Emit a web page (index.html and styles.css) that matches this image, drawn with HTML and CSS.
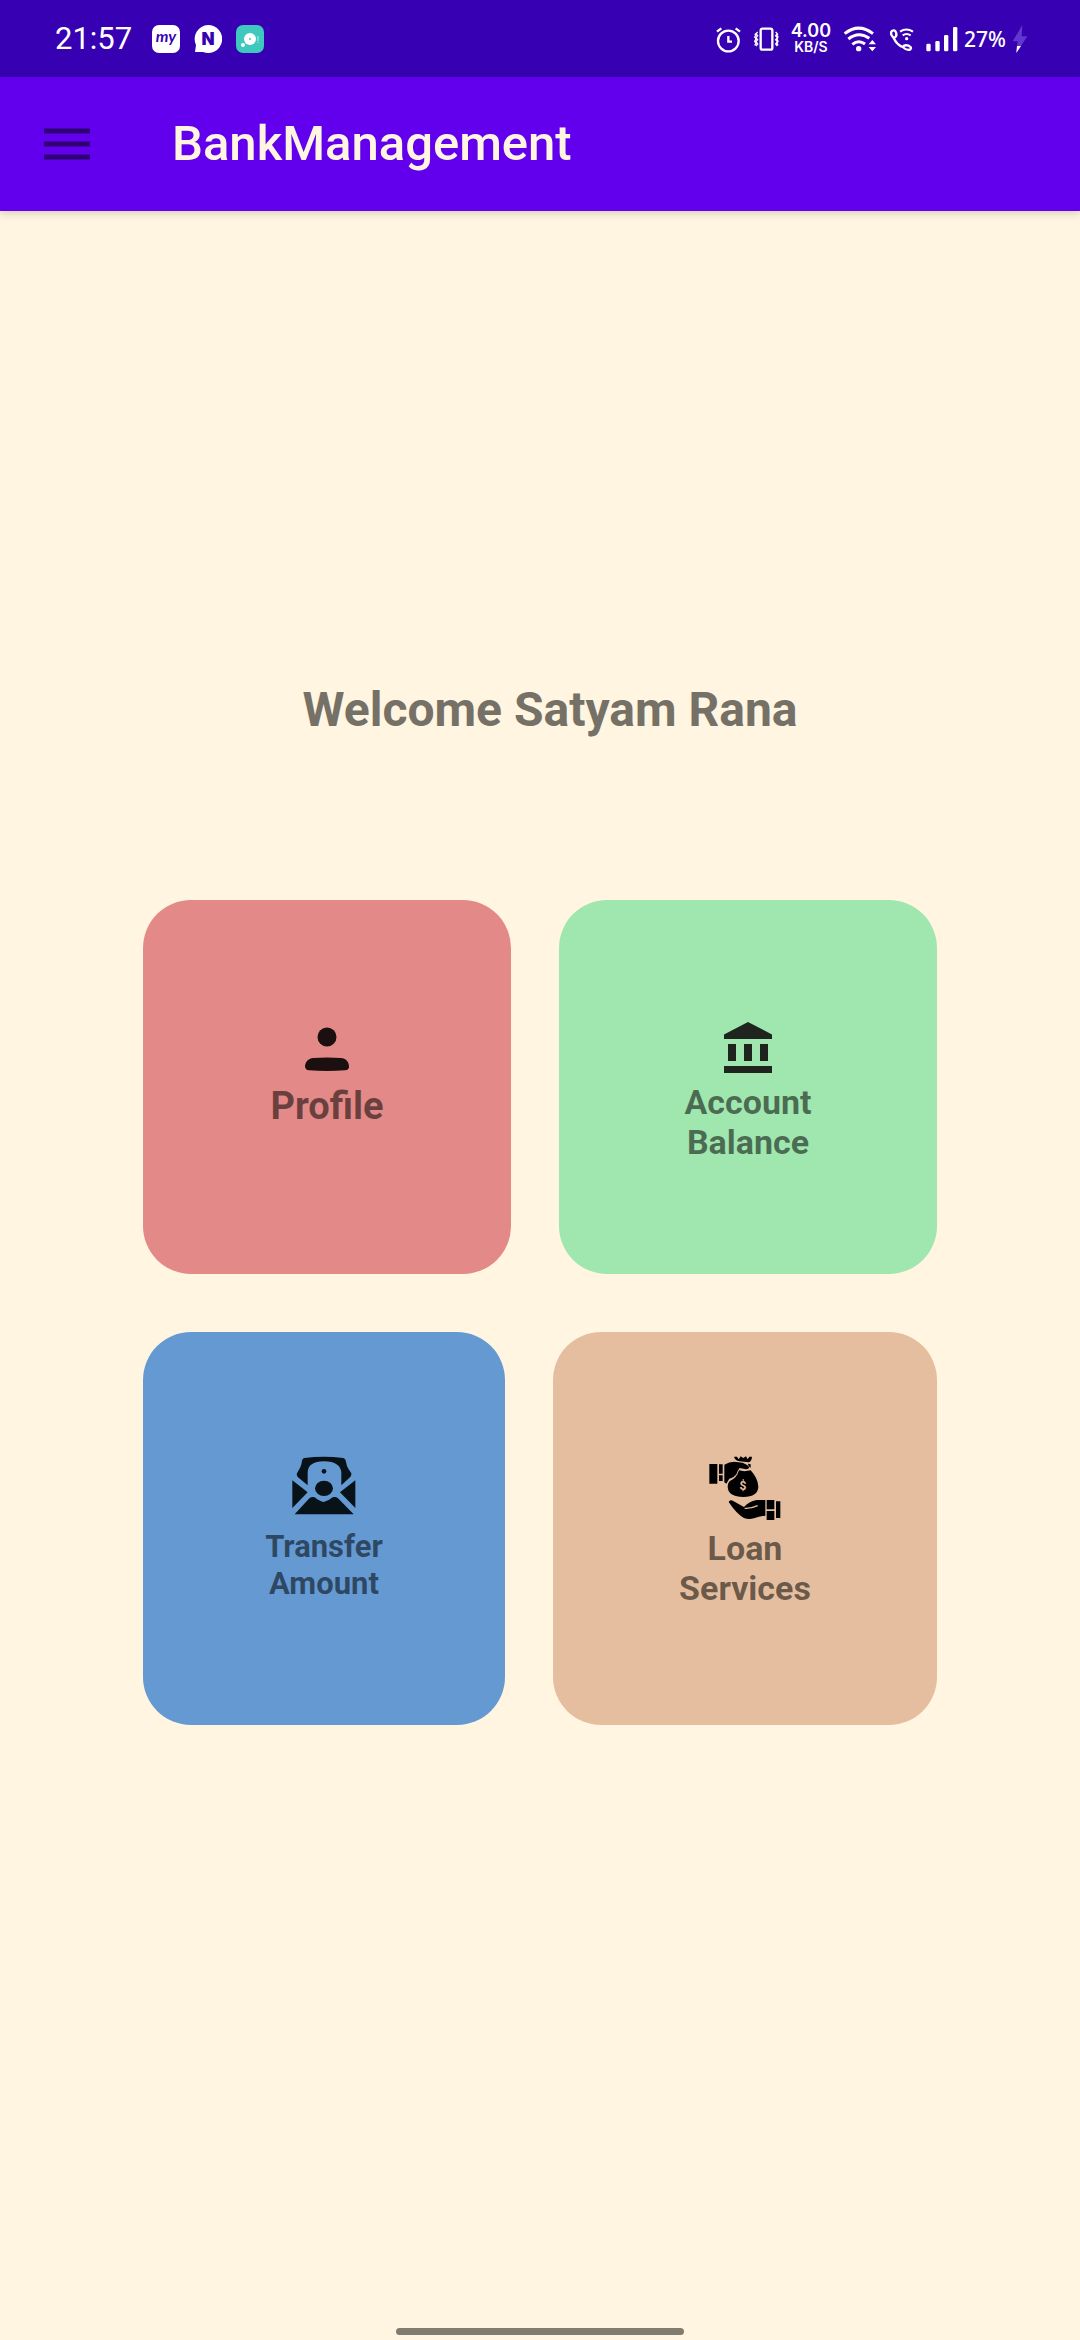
FILE: index.html
```html
<!DOCTYPE html>
<html lang="en">
<head>
<meta charset="utf-8">
<meta name="viewport" content="width=device-width, initial-scale=1">
<title>BankManagement</title>
<link rel="stylesheet" href="styles.css">
</head>
<body>
<div class="status">
  <div class="status-side">
    <span class="clock">21:57</span>
    <div class="notices">
      <svg width="28" height="30" viewBox="0 0 28 30" aria-hidden="true">
        <rect y="1" width="28" height="28" rx="7" fill="#fff"/>
        <text class="my" x="14" y="18" text-anchor="middle">my</text>
      </svg>
      <svg width="28" height="30" viewBox="0 0 28 30" aria-hidden="true">
        <path d="M14 1a14 14 0 1 1-5 27H1l1-7A14 14 0 0 1 14 1z" fill="#fff"/>
        <text class="n" x="14" y="21" text-anchor="middle">N</text>
      </svg>
      <svg width="28" height="30" viewBox="0 0 28 30" aria-hidden="true">
        <rect y="1" width="28" height="28" rx="7" fill="#3fc8bd"/>
        <circle cx="14" cy="15" r="6" fill="#fff"/>
        <circle cx="14" cy="15" r="1" fill="#3fc8bd"/>
        <circle cx="7" cy="21" r="2" fill="#fff"/>
        <path d="M22 12v5M22 18v1" stroke="#b5f0e8"/>
      </svg>
    </div>
  </div>
  <div class="status-side indicators">
    <svg width="25" height="28" viewBox="42 73 75 84" aria-hidden="true">
      <g fill="none" stroke="#fff" stroke-width="7"><circle cx="79" cy="121" r="31"/><path d="M79 106v17h11M45 93l13-10M101 83l13 10"/></g>
    </svg>
    <svg width="26" height="28" viewBox="154 73 78 84" aria-hidden="true">
      <g fill="none" stroke="#fff" stroke-width="5"><rect x="177" y="84" width="35" height="63" rx="6" stroke-width="7"/><path d="M168 94l-5 5 5 6-5 6 5 6-5 6 5 7-5 6M159 99l4 4-4 6 4 6-4 7 4 6-4 6M222 94l5 5-5 6 5 6-5 6 5 6-5 7 5 6M229 99l-3 4 3 6-3 6 3 7-3 6 3 6" stroke-width="4"/></g>
    </svg>
    <div class="net"><span class="rate">4.00</span><span class="unit">KB/S</span></div>
    <svg width="34" height="28" viewBox="428 73 102 84" aria-hidden="true">
      <g fill="none" stroke="#fff" stroke-width="9"><path d="M433 99Q475 66 518 99M444 115Q475 91 507 113M456 131Q475 116 494 130"/></g>
      <circle cx="475" cy="144" r="8" fill="#fff"/><path d="M505 131l11-13 11 13zM505 139l11 13 11-13z" fill="#fff"/>
    </svg>
    <svg width="25" height="28" viewBox="561 73 75 84" aria-hidden="true">
      <g fill="none" stroke="#fff" stroke-width="7" stroke-linejoin="round"><path d="M575 112Q562 98 570 91Q579 85 583 98Q585 108 575 112Q584 132 602 139Q607 131 620 135Q631 141 625 146Q615 151 602 139"/><path d="M594 93Q613 80 633 93M602 104Q614 96 626 104" stroke-width="6"/></g>
      <circle cx="614" cy="114" r="5" fill="#fff"/>
    </svg>
    <div class="battery">
      <svg width="32" height="28" viewBox="674 73 96 84" aria-hidden="true">
        <g fill="#fff"><rect x="675" y="129" width="13" height="23" rx="4"/><rect x="702" y="121" width="13" height="31" rx="4"/><rect x="728" y="103" width="13" height="49" rx="4"/><rect x="755" y="79" width="13" height="73" rx="4"/></g>
      </svg>
      <span class="percent">27%</span>
      <svg width="16" height="30" viewBox="929 71 48 90" aria-hidden="true">
        <path d="M960 74l-29 49h15l-4 35 33-50h-17z" fill="#6237cf"/><path d="M944 137h12l-14 21z" fill="#fff"/>
      </svg>
    </div>
  </div>
</div>

<header class="appbar">
  <button class="menu" type="button" aria-label="Open menu">
    <svg width="46" height="32" viewBox="0 0 46 32" aria-hidden="true"><path d="M0 3h46M0 16h46M0 29h46" stroke="#2f0073" stroke-width="5"/></svg>
  </button>
  <h1 class="title">BankManagement</h1>
</header>

<main class="content">
  <h2 class="welcome">Welcome Satyam Rana</h2>
  <div class="rows">
    <div class="row row-top">
      <button class="card profile" type="button">
        <svg class="icon" viewBox="0 0 72 72" aria-hidden="true" fill="#1b0f0f">
          <circle cx="36" cy="27" r="9.5"/>
          <path d="M14 56C14.500 51 18 48.500 22 48Q36 46.800 50 48C54.500 48.500 58 51 58 57Q58 60 54 60.300Q36 61.600 18 60.300Q14 60 14 56Z"/>
        </svg>
        <span class="label label-large">Profile</span>
      </button>
      <button class="card account" type="button">
        <svg class="icon" viewBox="0 0 72 72" aria-hidden="true" fill="#20241f">
          <path d="M36 12l24 12.500V29H12v-4.500zM16 34h8v17h-8zM32 34h8v17h-8zM48 34h8v17h-8zM12 56h48v7H12z"/>
        </svg>
        <span class="label">Account<br>Balance</span>
      </button>
    </div>
    <div class="row row-bottom">
      <button class="card transfer" type="button">
        <svg class="icon" viewBox="84 78 216 216" aria-hidden="true" fill="#081219">
          <path d="M133 84Q190 76 250 84Q257 86 258 95Q260 110 266 118L274 130Q275 136 270 142L244 166V130Q243 95 192 94Q143 95 143 128V166L114 142Q109 136 111 130L121 112Q125 103 126 92Q128 85 133 84Z"/>
          <circle cx="192" cy="124" r="7"/><ellipse cx="192" cy="175" rx="27" ry="23"/>
          <path d="M97 151L143 187L97 234ZM286 151L240 187L286 234ZM104 253L148 205Q155 199 164 202Q180 215 191 216Q204 214 218 202Q227 199 234 205L281 253Z"/>
        </svg>
        <span class="label label-small">Transfer<br>Amount</span>
      </button>
      <button class="card loan" type="button">
        <svg class="icon" viewBox="117 78 216 216" aria-hidden="true">
          <path d="M118 102h24v59h-24zM147 103h11v28h-11zM147 136h11v17h-11z"/>
          <path d="M163 104Q178 95 192 95L218 98Q232 103 238 112Q237 118 228 118L209 114Q203 121 200 131Q192 143 178 146L169 161L163 157Z"/>
          <path d="M192 81Q200 77 202 82L206 88L212 79L220 84L228 79L233 88L238 80H246Q245 94 236 97L208 94Q195 91 192 81Z"/>
          <path d="M234 101l8 2v10l-6-4z"/>
          <path d="M207 121Q222 126 242 121Q264 145 265 170Q264 200 220 201Q176 201 173 172Q173 157 181 152Q200 145 207 121Z"/>
          <text class="dollar" x="219" y="180" text-anchor="middle">$</text>
          <path d="M176 216Q180 206 191 214L222 231Q236 215 260 210L286 210V257Q268 258 252 265Q236 270 222 264Q200 252 176 216Z"/>
          <path d="M224 235Q240 237 263 227" fill="none" stroke="#e5be9f" stroke-width="4"/>
          <path d="M290 210h23v28h-23zM290 243h23v27h-23zM318 214h13v50h-13z"/>
        </svg>
        <span class="label">Loan<br>Services</span>
      </button>
    </div>
  </div>
</main>
<div class="home-bar"></div>
</body>
</html>
```
FILE: styles.css
```css
* {
  box-sizing: border-box;
}

body {
  margin: 0;
  min-height: 100vh;
  display: flex;
  flex-direction: column;
  background: #fff5e1;
  font-family: Roboto, sans-serif;
}

svg {
  display: block;
  flex: none;
}

button {
  border: 0;
  padding: 0;
  background: none;
  font: inherit;
  cursor: pointer;
}

/* Status bar */
.status {
  height: 77px;
  padding: 0 52px 0 55px;
  display: flex;
  justify-content: space-between;
  align-items: center;
  background: #3700b3;
  color: #fff;
}

.status-side,
.notices,
.battery {
  display: flex;
  align-items: center;
}

.status-side {
  gap: 20px;
}

.notices {
  gap: 14px;
}

.indicators {
  gap: 12px;
}

.battery {
  gap: 6px;
}

.clock {
  font-size: 31px;
  line-height: 36px;
}

.my {
  font: italic 700 16px Lato, sans-serif;
  fill: #3700b3;
}

.n {
  font: 900 17px Inter, sans-serif;
  fill: #3700b3;
}

.net {
  display: flex;
  flex-direction: column;
  align-items: center;
  font-family: Inter, sans-serif;
  font-weight: 600;
}

.rate {
  font-size: 18px;
  line-height: 16px;
}

.unit {
  font-size: 14px;
  line-height: 16px;
}

.percent {
  font: 500 21px/28px "Noto Sans", sans-serif;
}

/* App bar */
.appbar {
  position: relative;
  height: 134px;
  padding: 0 44px;
  display: flex;
  align-items: center;
  gap: 82px;
  background: #6200ee;
  box-shadow: 0 2px 8px rgba(0, 0, 0, 0.18);
}

.title {
  margin: 0;
  font-size: 49px;
  line-height: 58px;
  font-weight: 500;
  color: #fff5e1;
}

/* Dashboard */
.content {
  flex: 1;
  padding: 471px 143px 0;
}

.welcome {
  margin: 0 0 162px 20px;
  font-size: 48px;
  line-height: 56px;
  font-weight: 700;
  text-align: center;
  color: #757167;
}

.rows {
  display: flex;
  flex-direction: column;
  gap: 58px;
}

.row {
  display: grid;
  gap: 48px;
}

.row-top {
  grid-template-columns: 368fr 378fr;
}

.row-bottom {
  grid-template-columns: 362fr 384fr;
}

.card {
  display: flex;
  flex-direction: column;
  align-items: center;
  border-radius: 48px;
  color: rgba(0, 0, 0, 0.54);
}

.row-top .card {
  min-height: 374px;
  padding-top: 110px;
}

.row-bottom .card {
  min-height: 393px;
  padding-top: 124px;
}

.profile {
  background: #e38988;
}

.account {
  background: #a0e6af;
}

.transfer {
  background: #6499d2;
}

.loan {
  background: #e5be9f;
}

.icon {
  width: 72px;
  height: 72px;
}

.label {
  font-size: 34px;
  line-height: 40px;
  font-weight: 700;
  text-align: center;
}

.label-large {
  font-size: 38px;
  line-height: 48px;
}

.label-small {
  font-size: 31px;
  line-height: 37px;
}

.dollar {
  font: 700 36px Roboto, sans-serif;
  fill: #e5be9f;
}

.home-bar {
  width: 288px;
  height: 7px;
  margin: 0 auto 5px;
  border-radius: 4px;
  background: #817c70;
}
```
